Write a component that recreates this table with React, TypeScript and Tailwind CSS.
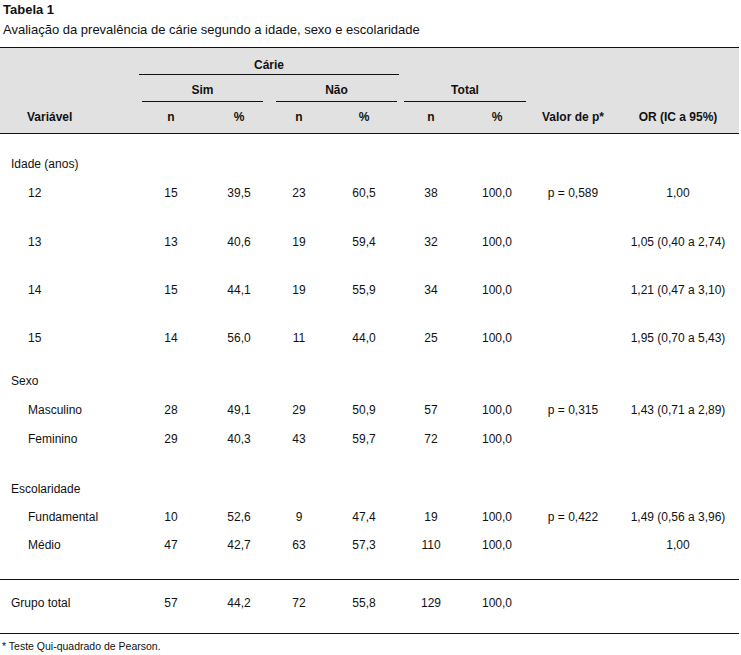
import React from "react";

const cols = "grid grid-cols-[140px_62px_74px_46px_84px_50px_82px_70px_131px]";

type Row = {
  label: string;
  sub?: boolean;
  vals?: string[];
  p?: string;
  or?: string;
  h: string;
};

const rows: Row[] = [
  { label: "Idade (anos)", h: "h-[29px]" },
  { label: "12", sub: true, vals: ["15", "39,5", "23", "60,5", "38", "100,0"], p: "p = 0,589", or: "1,00", h: "h-[49px]" },
  { label: "13", sub: true, vals: ["13", "40,6", "19", "59,4", "32", "100,0"], or: "1,05 (0,40 a 2,74)", h: "h-[48px]" },
  { label: "14", sub: true, vals: ["15", "44,1", "19", "55,9", "34", "100,0"], or: "1,21 (0,47 a 3,10)", h: "h-[48px]" },
  { label: "15", sub: true, vals: ["14", "56,0", "11", "44,0", "25", "100,0"], or: "1,95 (0,70 a 5,43)", h: "h-[43px]" },
  { label: "Sexo", h: "h-[29px]" },
  { label: "Masculino", sub: true, vals: ["28", "49,1", "29", "50,9", "57", "100,0"], p: "p = 0,315", or: "1,43 (0,71 a 2,89)", h: "h-[29px]" },
  { label: "Feminino", sub: true, vals: ["29", "40,3", "43", "59,7", "72", "100,0"], h: "h-[50px]" },
  { label: "Escolaridade", h: "h-[28px]" },
  { label: "Fundamental", sub: true, vals: ["10", "52,6", "9", "47,4", "19", "100,0"], p: "p = 0,422", or: "1,49 (0,56 a 3,96)", h: "h-[28px]" },
  { label: "Médio", sub: true, vals: ["47", "42,7", "63", "57,3", "110", "100,0"], or: "1,00", h: "h-[41px]" },
];

function DataRow({ r }: { r: Row }) {
  return (
    <div className={`${cols} ${r.h} leading-[14px]`}>
      <div className={r.sub ? "pl-[28px]" : "pl-[11px]"}>{r.label}</div>
      {(r.vals ?? ["", "", "", "", "", ""]).map((v, i) => (
        <div key={i} className="text-center">{v}</div>
      ))}
      <div className="text-center">{r.p ?? ""}</div>
      <div className="text-center pl-[9px]">{r.or ?? ""}</div>
    </div>
  );
}

export default function App() {
  return (
    <div className="w-[741px] h-[655px] bg-white text-[#111] text-[12px] font-['Liberation_Sans',Arial,Helvetica,sans-serif]">
      <div className="pt-[2px] pl-[3px] text-[13px] leading-[15px] font-bold">Tabela 1</div>
      <div className="pt-[5px] pl-[3px] text-[13px] leading-[15px]">
        Avaliação da prevalência de cárie segundo a idade, sexo e escolaridade
      </div>

      <div className="w-[739px] mt-[10px]">
        {/* cabeçalho */}
        <div className="bg-[#e1e1e1] border-t border-b border-[#111] pt-[10px] pb-[9px] font-bold leading-[14px]">
          <div className="ml-[139px] w-[260px]">
            <div className="text-center">Cárie</div>
            <div className="mt-[2px] h-px bg-[#111]" />
          </div>
          <div className="flex ml-[142px] mt-[8px]">
            <div className="w-[121px]">
              <div className="text-center">Sim</div>
              <div className="mt-[4px] h-px bg-[#111]" />
            </div>
            <div className="w-[121px] ml-[13px]">
              <div className="text-center">Não</div>
              <div className="mt-[4px] h-px bg-[#111]" />
            </div>
            <div className="w-[122px] ml-[7px]">
              <div className="text-center">Total</div>
              <div className="mt-[4px] h-px bg-[#111]" />
            </div>
          </div>
          <div className={`${cols} mt-[8px]`}>
            <div className="pl-[27px]">Variável</div>
            <div className="text-center">n</div>
            <div className="text-center">%</div>
            <div className="text-center">n</div>
            <div className="text-center">%</div>
            <div className="text-center">n</div>
            <div className="text-center">%</div>
            <div className="text-center">Valor de p*</div>
            <div className="text-center pl-[9px]">OR (IC a 95%)</div>
          </div>
        </div>

        {/* corpo */}
        <div className="pt-[23px]">
          {rows.map((r, i) => (
            <DataRow key={i} r={r} />
          ))}
        </div>

        <div className="border-t border-b border-[#111] pt-[16px] pb-[23px]">
          <div className={`${cols} leading-[14px]`}>
            <div className="pl-[11px]">Grupo total</div>
            <div className="text-center">57</div>
            <div className="text-center">44,2</div>
            <div className="text-center">72</div>
            <div className="text-center">55,8</div>
            <div className="text-center">129</div>
            <div className="text-center">100,0</div>
            <div />
            <div />
          </div>
        </div>
      </div>

      <div className="mt-[6px] pl-[2px] text-[10.5px] leading-[12px]">* Teste Qui-quadrado de Pearson.</div>
    </div>
  );
}
